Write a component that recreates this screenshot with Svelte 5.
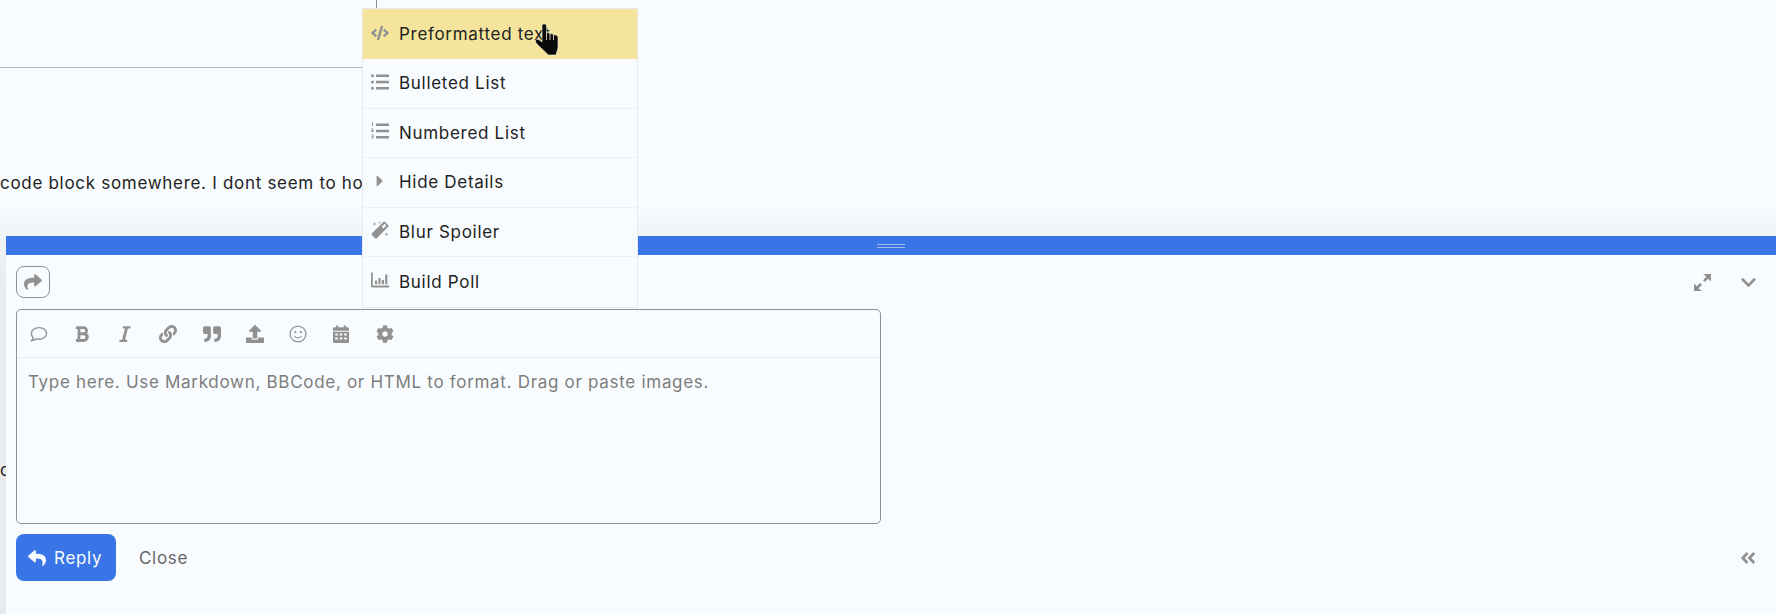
<script lang="ts">
  const icons: Record<string, [string, string]> = {
    reply: ['0 0 512 512', 'M8.309 189.836L184.313 37.851C199.719 24.546 224 35.347 224 56.015v80.053c160.629 1.839 288 34.032 288 186.258 0 61.441-39.581 122.309-83.333 154.132-13.653 9.931-33.111-2.533-28.077-18.631 45.344-145.012-21.507-183.51-176.59-185.742V360c0 20.7-24.3 31.453-39.687 18.164l-176.004-152c-11.071-9.562-11.086-26.753 0-36.328z'],
    share: ['0 0 512 512', 'M503.691 189.836L327.687 37.851C312.281 24.546 288 35.347 288 56.015v80.053C127.371 137.907 0 170.1 0 322.326c0 61.441 39.581 122.309 83.333 154.132 13.653 9.931 33.111-2.533 28.077-18.631C66.066 312.814 132.917 274.316 288 272.085V360c0 20.7 24.3 31.453 39.687 18.164l176.004-152c11.071-9.562 11.086-26.753 0-36.328z'],
    bold: ['0 0 384 512', 'M333.49 238a122 122 0 0 0 27-65.21C367.87 96.49 308 32 233.42 32H34a16 16 0 0 0-16 16v48a16 16 0 0 0 16 16h31.87v288H34a16 16 0 0 0-16 16v48a16 16 0 0 0 16 16h209.32c70.8 0 134.14-51.75 141-122.4 4.74-48.45-16.39-92.06-50.83-119.6zM145.66 112h87.76a48 48 0 0 1 0 96h-87.76zm87.76 288h-87.76V288h87.76a56 56 0 0 1 0 112z'],
    italic: ['0 0 320 512', 'M320 48v32a16 16 0 0 1-16 16h-62.76l-80 320H208a16 16 0 0 1 16 16v32a16 16 0 0 1-16 16H16a16 16 0 0 1-16-16v-32a16 16 0 0 1 16-16h62.76l80-320H112a16 16 0 0 1-16-16V48a16 16 0 0 1 16-16h192a16 16 0 0 1 16 16z'],
    link: ['0 0 512 512', 'M326.612 185.391c59.747 59.809 58.927 155.698.36 214.59-.11.12-.24.25-.36.37l-67.2 67.2c-59.27 59.27-155.699 59.262-214.96 0-59.27-59.26-59.27-155.7 0-214.96l37.106-37.106c9.84-9.84 26.786-3.3 27.294 10.606.648 17.722 3.826 35.527 9.69 52.721 1.986 5.822.567 12.262-3.783 16.612l-13.087 13.087c-28.026 28.026-28.905 73.66-1.155 101.96 28.024 28.579 74.086 28.749 102.325.51l67.2-67.19c28.191-28.191 28.073-73.757 0-101.83-3.701-3.694-7.429-6.564-10.341-8.569a16.037 16.037 0 0 1-6.947-12.606c-.396-10.567 3.348-21.456 11.698-29.806l21.054-21.055c5.521-5.521 14.182-6.199 20.584-1.731a152.482 152.482 0 0 1 20.522 17.197zM467.547 44.449c-59.261-59.262-155.69-59.27-214.96 0l-67.2 67.2c-.12.12-.25.25-.36.37-58.566 58.892-59.387 154.781.36 214.59a152.454 152.454 0 0 0 20.521 17.196c6.402 4.468 15.064 3.789 20.584-1.731l21.054-21.055c8.35-8.35 12.094-19.239 11.698-29.806a16.037 16.037 0 0 0-6.947-12.606c-2.912-2.005-6.64-4.875-10.341-8.569-28.073-28.073-28.191-73.639 0-101.83l67.2-67.19c28.239-28.239 74.3-28.069 102.325.51 27.75 28.3 26.872 73.934-1.155 101.96l-13.087 13.087c-4.35 4.35-5.769 10.79-3.783 16.612 5.864 17.194 9.042 34.999 9.69 52.721.509 13.906 17.454 20.446 27.294 10.606l37.106-37.106c59.271-59.259 59.271-155.699.001-214.959z'],
    quote: ['0 0 512 512', 'M464 32H336c-26.5 0-48 21.5-48 48v128c0 26.5 21.5 48 48 48h80v64c0 35.3-28.7 64-64 64h-8c-13.3 0-24 10.7-24 24v48c0 13.3 10.7 24 24 24h8c88.4 0 160-71.6 160-160V80c0-26.5-21.5-48-48-48zm-288 0H48C21.5 32 0 53.5 0 80v128c0 26.5 21.5 48 48 48h80v64c0 35.3-28.7 64-64 64h-8c-13.3 0-24 10.7-24 24v48c0 13.3 10.7 24 24 24h8c88.4 0 160-71.6 160-160V80c0-26.5-21.5-48-48-48z'],
    upload: ['0 0 512 512', 'M296 384h-80c-13.3 0-24-10.7-24-24V192h-87.7c-17.8 0-26.7-21.5-14.1-34.1L242.3 5.7c7.5-7.5 19.8-7.5 27.3 0l152.2 152.2c12.6 12.6 3.7 34.1-14.1 34.1H320v168c0 13.3-10.7 24-24 24zm216-8v112c0 13.3-10.7 24-24 24H24c-13.3 0-24-10.7-24-24V376c0-13.3 10.7-24 24-24h136v8c0 30.9 25.1 56 56 56h80c30.9 0 56-25.1 56-56v-8h136c13.3 0 24 10.7 24 24z'],
    cog: ['0 0 512 512', 'M487.4 315.7l-42.6-24.6c4.3-23.2 4.3-47 0-70.2l42.6-24.6c4.9-2.8 7.1-8.6 5.5-14-11.1-35.6-30-67.8-54.7-94.6-3.8-4.1-10-5.1-14.8-2.3L380.8 110c-17.9-15.4-38.5-27.3-60.8-35.1V25.8c0-5.6-3.9-10.5-9.4-11.7-36.7-8.2-74.3-7.8-109.2 0-5.5 1.2-9.4 6.1-9.4 11.7V75c-22.2 7.9-42.8 19.8-60.8 35.1L88.7 85.5c-4.9-2.8-11-1.9-14.8 2.3-24.7 26.7-43.6 58.9-54.7 94.6-1.7 5.4.6 11.2 5.5 14L67.3 221c-4.3 23.2-4.3 47 0 70.2l-42.6 24.6c-4.9 2.8-7.1 8.6-5.5 14 11.1 35.6 30 67.8 54.7 94.6 3.8 4.1 10 5.1 14.8 2.3l42.6-24.6c17.9 15.4 38.5 27.3 60.8 35.1v49.2c0 5.6 3.9 10.5 9.4 11.7 36.7 8.2 74.3 7.8 109.2 0 5.5-1.2 9.4-6.1 9.4-11.7v-49.2c22.2-7.9 42.8-19.8 60.8-35.1l42.6 24.6c4.9 2.8 11 1.9 14.8-2.3 24.7-26.7 43.6-58.9 54.7-94.6 1.5-5.5-.7-11.3-5.6-14.1zM256 336c-44.1 0-80-35.9-80-80s35.9-80 80-80 80 35.9 80 80-35.9 80-80 80z'],
    chevron: ['0 0 448 512', 'M207.029 381.476L12.686 187.132c-9.373-9.373-9.373-24.569 0-33.941l22.667-22.667c9.357-9.357 24.522-9.375 33.901-.04L224 284.505l154.745-154.021c9.379-9.335 24.544-9.317 33.901.04l22.667 22.667c9.373 9.373 9.373 24.569 0 33.941L240.971 381.476c-9.373 9.372-24.569 9.372-33.942 0z'],
    dleft: ['0 0 448 512', 'M223.7 239l136-136c9.4-9.4 24.6-9.4 33.9 0l22.6 22.6c9.4 9.4 9.4 24.6 0 33.9L319.9 256l96.4 96.4c9.4 9.4 9.4 24.6 0 33.9L393.7 409c-9.4 9.4-24.6 9.4-33.9 0l-136-136c-9.5-9.4-9.5-24.6-.1-34zm-192 34l136 136c9.4 9.4 24.6 9.4 33.9 0l22.6-22.6c9.4-9.4 9.4-24.6 0-33.9L127.9 256l96.4-96.4c9.4-9.4 9.4-24.6 0-33.9L201.7 103c-9.4-9.4-24.6-9.4-33.9 0l-136 136c-9.5 9.4-9.5 24.6-.1 34z'],
    caret: ['0 0 192 512', 'M0 384.662V127.338c0-17.818 21.543-26.741 34.142-14.142l128.662 128.662c7.81 7.81 7.81 20.474 0 28.284L34.142 398.804C21.543 411.404 0 402.48 0 384.662z'],
    code: ['0 0 640 512', 'M278.9 511.5l-61-17.7c-6.4-1.8-10-8.5-8.2-14.9L346.2 8.7c1.8-6.4 8.5-10 14.9-8.2l61 17.7c6.4 1.8 10 8.5 8.2 14.9L293.8 503.3c-1.9 6.4-8.5 10.1-14.9 8.2zm-114-112.2l43.5-46.4c4.6-4.9 4.3-12.7-.8-17.2L117 256l90.6-79.7c5.1-4.5 5.5-12.3.8-17.2l-43.5-46.4c-4.5-4.8-12.1-5.1-17-.5L3.8 247.2c-5.1 4.7-5.1 12.8 0 17.5l144.1 135.1c4.9 4.6 12.5 4.4 17-.5zm327.2.6l144.1-135.1c5.1-4.7 5.1-12.8 0-17.5L492.1 112.1c-4.8-4.5-12.4-4.3-17 .5L431.6 159c-4.6 4.9-4.3 12.7.8 17.2L523 256l-90.6 79.7c-5.1 4.5-5.5 12.3-.8 17.2l43.5 46.4c4.5 4.9 12.1 5.1 17 .6z'],
    list: ['0 0 18 18', 'M0 2.8a1.5 1.5 0 1 1 3 0a1.5 1.5 0 1 1-3 0zM0 9a1.5 1.5 0 1 1 3 0a1.5 1.5 0 1 1-3 0zM0 15.200a1.5 1.5 0 1 1 3 0a1.5 1.5 0 1 1-3 0zM5 1.6h13v2.400H5zM5 7.800h13v2.400H5zM5 14h13v2.400H5z'],
    olist: ['0 0 18 18', 'M1 .6h1v3.4H1zM.3 6.6h2.2v.8H1.2v.7h1.3v1.8H.3V9h1.3v-.2H.3zM.3 12.4h2.2v4.2H.3v-.8h1.3v-.9H.6v-.7h1v-1H.3zM5 1.6h13v2.400H5zM5 7.800h13v2.400H5zM5 14h13v2.400H5z'],
    wand: ['0 0 18 18', 'M14 .9L17.200 4.100c.5.5.5 1.200 0 1.700L5.800 17.200c-.5.5-1.200.5-1.700 0L.9 14c-.5-.5-.5-1.200 0-1.700L12.300.9c.5-.5 1.200-.5 1.700 0zM10.700 5.800l1.600 1.600 3-3-1.600-1.600zM3.400 1l.5 1.400 1.400.5-1.400.5-.5 1.400-.5-1.400-1.400-.5 1.400-.5zM8.400 .2l.4 1 1 .4-1 .4-.4 1-.4-1-1-.4 1-.4zM15.600 11.500l.5 1.300 1.300.5-1.300.5-.5 1.300-.5-1.300-1.300-.5 1.300-.5z'],
    chart: ['0 0 18 18', 'M0 1.600h1.800v12.800H18v2H1.200C.5 16.400 0 15.900 0 15.200zM4 9.600h2.200v3.600H4zM7.400 7h2.200v6.200H7.400zM10.800 9h2.200v4.200h-2.200zM14.200 3.400h2.200v9.800h-2.200z'],
    expand: ['0 0 18 18', 'M10 0h8v8l-3-3-3.500 3.500-2-2L13 3zM8 18H0v-8l3 3 3.500-3.500 2 2L5 15z'],
    calendar: ['0 0 16 18', 'M3 .4h2.2v1.8h5.6V.4H13v1.8h1.4c.9 0 1.6.7 1.6 1.6v1.9H0V3.8c0-.9.7-1.6 1.6-1.6H3zM0 6.700h16v9.700c0 .9-.7 1.600-1.600 1.600H1.600C.7 18 0 17.300 0 16.400zM2.200 8.600v2h2.600v-2zm4.500 0v2h2.600v-2zm4.500 0v2h2.600v-2zM2.200 12.600v2h2.600v-2zm4.500 0v2h2.600v-2zm4.500 0v2h2.600v-2z']
  }

  const menu = [
    { icon: 'code', label: 'Preformatted text', active: true },
    { icon: 'list', label: 'Bulleted List' },
    { icon: 'olist', label: 'Numbered List' },
    { icon: 'caret', label: 'Hide Details' },
    { icon: 'wand', label: 'Blur Spoiler' },
    { icon: 'chart', label: 'Build Poll' }
  ]

  const tools = ['comment', 'bold', 'italic', 'link', 'quote', 'upload', 'smile', 'calendar', 'cog']
</script>

{#snippet icon(name: string, cls = '')}
  {#if name === 'comment'}
    <svg class="ic {cls}" viewBox="0 0 18 18" aria-hidden="true">
      <path d="M9 2.6c4.3 0 7.6 2.6 7.6 5.8S13.300 14.200 9 14.200c-1 0-2-.1-2.900-.4-1.100 1-2.700 1.700-4.500 1.800.8-.8 1.400-1.900 1.600-3C1.900 11.500 1.400 10 1.400 8.400 1.400 5.200 4.700 2.600 9 2.600z" fill="none" stroke="currentColor" stroke-width="1.400" />
    </svg>
  {:else if name === 'smile'}
    <svg class="ic {cls}" viewBox="0 0 18 18" aria-hidden="true">
      <circle cx="9" cy="9" r="7.900" fill="none" stroke="currentColor" stroke-width="1.300" />
      <circle cx="6.300" cy="7.200" r="1.100" fill="currentColor" />
      <circle cx="11.700" cy="7.200" r="1.100" fill="currentColor" />
      <path d="M5.300 11c1 1.300 2.300 1.900 3.700 1.900s2.700-.6 3.700-1.900" fill="none" stroke="currentColor" stroke-width="1.200" />
    </svg>
  {:else}
    <svg class="ic {cls}" viewBox={icons[name][0]} aria-hidden="true">
      <path d={icons[name][1]} fill="currentColor" fill-rule="evenodd" />
    </svg>
  {/if}
{/snippet}

<div class="page">
  <div class="topic">
    <div class="post-head">
      <div class="head-main"></div>
      <div class="head-side"></div>
    </div>
    <p class="post-text">code block somewhere. I dont seem to ho</p>
  </div>

  <div class="lower">
    <div class="strip">c</div>

    <div class="composer">
      <div class="grip"><span class="grip-lines"></span></div>

      <div class="composer-head">
        <button class="share" type="button" aria-label="Share">{@render icon('share')}</button>
        <div class="head-actions">
          {@render icon('expand')}
          {@render icon('chevron')}
        </div>
      </div>

      <div class="editor">
        <div class="toolbar">
          {#each tools as t}
            <span class="tool">{@render icon(t)}</span>
          {/each}
        </div>
        <div class="placeholder">Type here. Use Markdown, BBCode, or HTML to format. Drag or paste images.</div>
      </div>

      <div class="actions">
        <button class="reply" type="button">{@render icon('reply')}<span>Reply</span></button>
        <span class="close">Close</span>
        <span class="collapse">{@render icon('dleft')}</span>
      </div>
    </div>
  </div>

  <ul class="popup">
    {#each menu as item}
      <li class:active={item.active}>
        <span class="menu-ic">{@render icon(item.icon)}</span>
        <span>{item.label}</span>
      </li>
    {/each}
  </ul>

  <svg class="pointer" viewBox="0 0 24 33" aria-hidden="true">
    <path d="M7 14V2.500C7 .5 11.500 .5 11.500 2.500V10C12.500 9.500 14.500 9.500 15 11C16 10.500 18 10.500 18.500 12C20 11.500 22.500 12 23 14V24C23 27 21.500 29 21 32H13C11 29 8 27 6 25C3 22 0 19.500 .5 17.500C1 15.500 4 16 7 19Z" fill="#0a0a0a" stroke="#f7f4e8" stroke-width=".6" />
    <path d="M11.500 10V17M15 11V17M18.500 12V17" stroke="#f7f4e8" stroke-width=".8" fill="none" />
  </svg>
</div>

<style>
  :global(body) {
    margin: 0;
    background: #f9fcff;
  }

  .page {
    position: relative;
    width: 1776px;
    height: 614px;
    overflow: hidden;
    font-family: Inter, 'Liberation Sans', sans-serif;
    font-size: 17px;
    letter-spacing: 0.7px;
    color: #222222;
    background: #f9fcff;
  }

  .ic {
    display: block;
    width: 18px;
    height: 18px;
    color: #919191;
  }

  .topic {
    height: 236px;
    overflow: hidden;
    background: linear-gradient(#f9fcff 205px, #f1f4f7 236px);
  }

  .post-head {
    display: flex;
    height: 68px;
    width: 377px;
  }

  .head-main {
    flex: 1;
    border-bottom: 1px solid #b8b8b8;
  }

  .head-side {
    width: 1px;
    height: 8px;
    background: #919191;
  }

  .post-text {
    width: 362px;
    overflow: hidden;
    margin: 105px 0 0;
    line-height: 20px;
    white-space: nowrap;
  }

  .lower {
    display: flex;
    height: 378px;
  }

  .strip {
    width: 6px;
    flex: none;
    overflow: hidden;
    box-sizing: border-box;
    padding-top: 224px;
    line-height: 20px;
    background: linear-gradient(#f1f4f7, #e8ebee 60px);
  }

  .composer {
    flex: 1;
    min-width: 0;
    display: flex;
    flex-direction: column;
    background: #f9fcff;
  }

  .grip {
    height: 19px;
    flex: none;
    background: #3975e6;
    display: flex;
    align-items: center;
    justify-content: center;
    margin-bottom: 11px;
  }

  .grip-lines {
    width: 28px;
    height: 4px;
    box-sizing: border-box;
    border-top: 1px solid #9dbaf2;
    border-bottom: 1px solid #9dbaf2;
  }

  .composer-head {
    display: flex;
    align-items: center;
    justify-content: space-between;
    padding: 0 19px 0 10px;
    height: 32px;
    margin-bottom: 11px;
  }

  .share {
    width: 34px;
    height: 32px;
    box-sizing: border-box;
    padding: 0;
    background: transparent;
    border: 1px solid #919191;
    border-radius: 8px;
    display: flex;
    align-items: center;
    justify-content: center;
  }

  .head-actions {
    display: flex;
    align-items: center;
    gap: 29px;
  }

  .head-actions :global(.ic) {
    width: 17px;
    height: 17px;
  }

  .editor {
    width: 865px;
    height: 215px;
    flex: none;
    box-sizing: border-box;
    margin-left: 10px;
    border: 1px solid #919191;
    border-radius: 5px;
  }

  .toolbar {
    height: 48px;
    box-sizing: border-box;
    border-bottom: 1px solid #e8ebee;
    display: flex;
    align-items: center;
  }

  .tool {
    width: 43.250px;
    display: flex;
    justify-content: center;
  }

  .placeholder {
    padding: 14px 11px;
    line-height: 21px;
    color: #7d7d7d;
    white-space: nowrap;
  }

  .actions {
    display: flex;
    align-items: center;
    margin: 10px 0 0 10px;
  }

  .reply {
    width: 100px;
    height: 47px;
    box-sizing: border-box;
    border: 0;
    border-radius: 8px;
    background: #3975e6;
    color: #f9fcff;
    font: inherit;
    letter-spacing: inherit;
    padding: 0 0 0 12px;
    display: flex;
    align-items: center;
    gap: 8px;
  }

  .reply :global(.ic) {
    color: #f9fcff;
  }

  .close {
    margin-left: 23px;
    color: #666666;
  }

  .collapse {
    margin-left: auto;
    margin-right: 20px;
  }

  .collapse :global(.ic) {
    width: 16px;
    height: 18px;
  }

  .popup {
    position: absolute;
    left: 362px;
    top: 8px;
    width: 276px;
    box-sizing: border-box;
    margin: 0;
    padding: 0;
    list-style: none;
    background: #f9fcff;
    border: 1px solid #e8ebee;
  }

  .popup li {
    height: 49.500px;
    box-sizing: border-box;
    display: flex;
    align-items: center;
    gap: 10px;
    padding: 0 8px;
    border-bottom: 1px solid #eef1f4;
  }

  .popup li:last-child {
    border-bottom: 0;
  }

  .popup li.active {
    background: #f5e59c;
    height: 50px;
    border-bottom: 0;
  }

  .menu-ic {
    width: 18px;
    display: flex;
    justify-content: center;
    margin-top: -3px;
  }

  .pointer {
    position: absolute;
    left: 535px;
    top: 23px;
    width: 24px;
    height: 33px;
  }
</style>
